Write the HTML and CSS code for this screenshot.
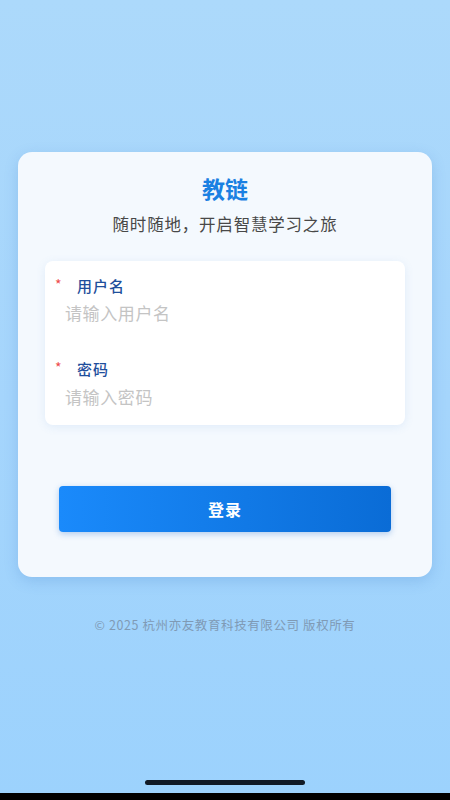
FILE: index.html
```html
<!DOCTYPE html>
<html lang="zh-CN">
<head>
<meta charset="utf-8">
<meta name="viewport" content="width=device-width, initial-scale=1">
<title>教链 登录</title>
<link rel="stylesheet" href="styles.css">
</head>
<body>
<div class="screen">
  <main class="content">
    <section class="card">
      <h1 class="title">教链</h1>
      <p class="subtitle">随时随地，开启智慧学习之旅</p>
      <div class="form">
        <div class="field">
          <div class="label"><span class="req">*</span><span class="label-text">用户名</span></div>
          <div class="input">请输入用户名</div>
        </div>
        <div class="field second">
          <div class="label"><span class="req">*</span><span class="label-text">密码</span></div>
          <div class="input">请输入密码</div>
        </div>
      </div>
      <button class="btn" type="button">登录</button>
    </section>
    <p class="footer">© 2025 杭州亦友教育科技有限公司 版权所有</p>
  </main>
  <div class="home-area"><div class="home-indicator"></div></div>
  <div class="bottom-black"></div>
</div>
</body>
</html>
```
FILE: styles.css
```css
* { box-sizing: border-box; }
html, body { margin: 0; padding: 0; }
body {
  font-family: "Noto Sans CJK SC", "Noto Sans", sans-serif;
  width: 450px;
  height: 800px;
  overflow: hidden;
}
.screen {
  width: 450px;
  height: 800px;
  display: flex;
  flex-direction: column;
  background: linear-gradient(180deg, #acd9fb 0%, #a5d5fc 50%, #9cd2fd 100%);
}
.content {
  flex: 1;
  display: flex;
  flex-direction: column;
  padding: 152px 18px 0;
}
.card {
  background: #f4f9fe;
  border-radius: 14px;
  padding: 22px 27px 45px;
  box-shadow: 0 4px 14px rgba(60, 120, 190, 0.22);
  display: flex;
  flex-direction: column;
}
.title {
  margin: 0;
  text-align: center;
  font-size: 23px;
  line-height: 28px;
  font-weight: 700;
  color: #1a80e2;
}
.subtitle {
  margin: 10px 0 0;
  text-align: center;
  font-size: 16.5px;
  line-height: 24px;
  color: #484848;
  letter-spacing: 0.8px;
}
.form {
  margin-top: 25px;
  background: #fff;
  border-radius: 8px;
  padding: 15px 20px 16px 10px;
  box-shadow: 0 2px 10px rgba(80, 140, 210, 0.12);
}
.field.second { margin-top: 34px; }
.label {
  display: flex;
  align-items: center;
  height: 20px;
}
.req {
  color: #ee4b4b;
  font-size: 14px;
  width: 22px;
  line-height: 20px;
  position: relative;
  top: -2px;
}
.label-text {
  font-size: 15px;
  line-height: 20px;
  color: #1f4f9c;
  font-weight: 500;
  letter-spacing: 1px;
}
.input {
  margin-top: 5px;
  padding-left: 10px;
  font-size: 17px;
  line-height: 24px;
  color: #c4c4c4;
  letter-spacing: 0.6px;
}
.field.second .input { margin-top: 6px; }
.btn {
  margin: 61px 14px 0;
  height: 46px;
  border: none;
  border-radius: 4px;
  background: linear-gradient(90deg, #1a8afb 0%, #0a6cd6 100%);
  color: #fff;
  font-family: inherit;
  font-size: 16px;
  font-weight: 700;
  letter-spacing: 1px;
  box-shadow: 0 2px 6px rgba(20, 100, 200, 0.3);
}
.footer {
  margin: 39px 0 0;
  text-align: center;
  font-size: 12.5px;
  line-height: 18px;
  color: #7f9ab5;
  letter-spacing: 0.6px;
}
.home-area {
  height: 13px;
  display: flex;
  justify-content: center;
  align-items: flex-start;
}
.home-indicator {
  width: 160px;
  height: 5px;
  border-radius: 3px;
  background: #111a26;
}
.bottom-black {
  height: 7px;
  background: #000;
}
```
